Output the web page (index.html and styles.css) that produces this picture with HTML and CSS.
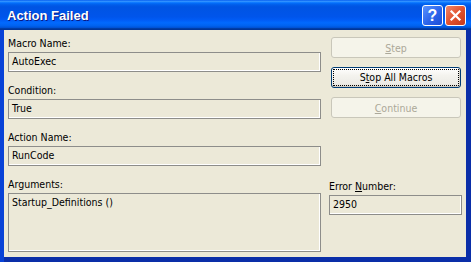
FILE: index.html
```html
<!DOCTYPE html>
<html lang="en">
<head>
    <meta charset="UTF-8">
    <meta name="viewport" content="width=device-width, initial-scale=1.0">
    <title>Action Failed</title>
    <link rel="stylesheet" href="styles.css">
</head>
<body>
    <div class="window">
        <div class="titlebar">
            <span class="title">Action Failed</span>
            <div class="controls">
                <span class="ctl help">?</span>
                <span class="ctl close">
                    <svg width="13" height="13" viewBox="0 0 13 13">
                        <path d="M2.5 2.5 L10.5 10.5 M10.5 2.5 L2.5 10.5" stroke="#fff" stroke-width="2.2" stroke-linecap="square"/>
                    </svg>
                </span>
            </div>
        </div>

        <div class="client">
            <div class="fields">
                <div class="field">
                    <label>Macro Name:</label>
                    <div class="box">AutoExec</div>
                </div>
                <div class="field">
                    <label>Condition:</label>
                    <div class="box">True</div>
                </div>
                <div class="field">
                    <label>Action Name:</label>
                    <div class="box">RunCode</div>
                </div>
                <div class="field">
                    <label>Arguments:</label>
                    <div class="box box-tall">Startup_Definitions ()</div>
                </div>
            </div>

            <div class="side">
                <button class="btn" disabled><u>S</u>tep</button>
                <button class="btn btn-default"><span class="focus">S<u>t</u>op All Macros</span></button>
                <button class="btn" disabled><u>C</u>ontinue</button>
                <div class="field error">
                    <label>Error <u>N</u>umber:</label>
                    <div class="box">2950</div>
                </div>
            </div>
        </div>
    </div>
</body>
</html>
```

FILE: styles.css
```css
body {
    margin: 0;
    padding: 0;
    font-family: "DejaVu Sans Condensed", "Liberation Sans", sans-serif;
    font-size: 10.5px;
    color: #000;
    overflow: hidden;
}

.window {
    width: 471px;
    height: 262px;
    box-sizing: border-box;
    display: flex;
    flex-direction: column;
    background-color: #0a2ea8;
    box-shadow: inset 4px 0 0 #0842d7;
    overflow: hidden;
}

.titlebar {
    height: 30px;
    flex: none;
    display: flex;
    align-items: flex-start;
    justify-content: space-between;
    padding: 0 5px 0 7px;
    background: linear-gradient(to bottom, #0058ee 0%, #3593ff 4%, #288eff 6%, #127dff 8%, #036ffc 10%, #0262ee 14%, #0057e5 20%, #0054e3 24%, #0055eb 56%, #005bf5 66%, #026afe 76%, #0062ef 86%, #0052d6 92%, #0040ab 94%, #003092 100%);
}

.title {
    padding-top: 8px;
    line-height: 15px;
    font-family: "Liberation Sans", Arial, sans-serif;
    font-weight: bold;
    font-size: 13px;
    color: #fff;
    text-shadow: 1px 1px 0 #0a1883;
}

.controls {
    display: flex;
    gap: 2px;
    padding-top: 5px;
}

.ctl {
    width: 21px;
    height: 21px;
    box-sizing: border-box;
    border: 1px solid #fff;
    border-radius: 3px;
    display: flex;
    align-items: center;
    justify-content: center;
}

.help {
    background: linear-gradient(135deg, #5a93ff 0%, #2c64ea 55%, #1c4ed6 100%);
    color: #fff;
    font-family: "Liberation Sans", Arial, sans-serif;
    font-weight: bold;
    font-size: 16px;
    line-height: 19px;
}

.close {
    background: linear-gradient(135deg, #f0866a 0%, #e2532f 50%, #c8391a 100%);
}

.client {
    height: 227px;
    flex: none;
    box-sizing: border-box;
    display: flex;
    gap: 8px;
    padding: 7px 4px 0 4px;
    margin: 0 5px 0 4px;
    background-color: #ece9d8;
}

.fields {
    width: 313px;
}

.field {
    margin-bottom: 12px;
}

.field:last-child {
    margin-bottom: 0;
}

.field label {
    display: block;
    line-height: 13px;
    margin-bottom: 2px;
}

.box {
    height: 20px;
    box-sizing: border-box;
    padding: 2px 3px;
    line-height: 13px;
    border: 1px solid #8d8d8a;
    box-shadow: inset -1px -1px 0 #fff;
    background-color: #ece9d8;
    white-space: nowrap;
}

.box-tall {
    height: 59px;
}

.side {
    width: 133px;
    display: flex;
    flex-direction: column;
}

.btn {
    height: 21px;
    width: 130px;
    margin: 0 1px 9px 2px;
    padding: 0;
    font-family: inherit;
    font-size: inherit;
    border-radius: 3px;
    border: 1px solid #003c74;
    background: linear-gradient(to bottom, #ffffff 0%, #f4f3ee 40%, #ecebe6 85%, #d6d0c5 100%);
    color: #000;
}

.btn:disabled {
    border-color: #c9c7ba;
    background: #f5f4ea;
    color: #aca899;
}

.btn-default {
    box-shadow: inset 0 -1px 0 #cdcac3, inset -1px 0 0 #d8d4cb;
}

.focus {
    display: block;
    margin: 0 2px;
    line-height: 13px;
    padding: 1px 0;
    outline: 1px dotted #000;
}

.error {
    margin-top: 53px;
}
```
